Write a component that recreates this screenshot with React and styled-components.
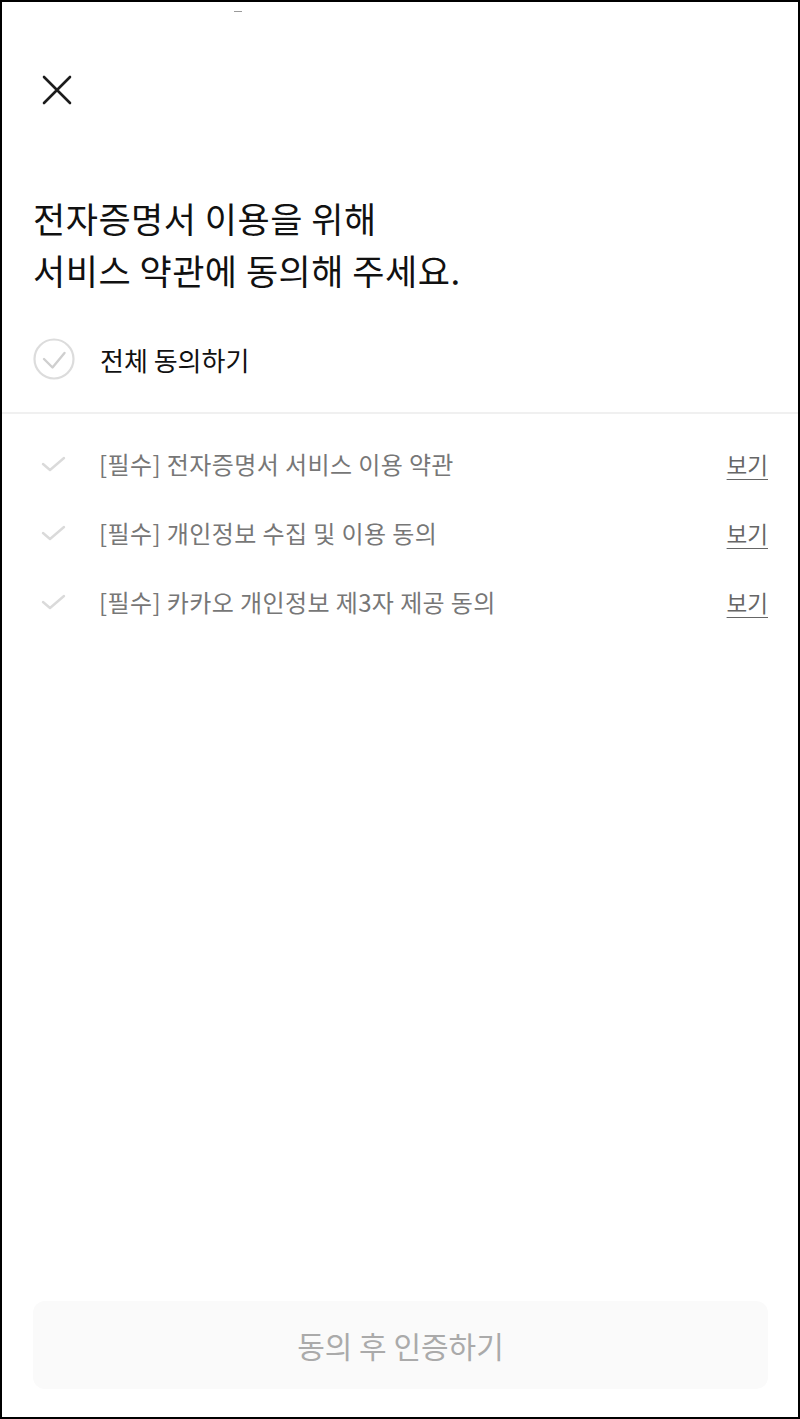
import React from 'react';
import styled, { createGlobalStyle } from 'styled-components';

const GlobalStyle = createGlobalStyle`
  * { box-sizing: border-box; }
  html, body { margin: 0; padding: 0; background: #fff; }
  body {
    font-family: "Noto Sans CJK KR", "Noto Sans", sans-serif;
    -webkit-font-smoothing: antialiased;
  }
`;

const Frame = styled.div`
  width: 800px;
  height: 1419px;
  border: 2px solid #000;
  display: flex;
  flex-direction: column;
  background: #fff;
`;

const StatusBar = styled.div`
  height: 20px;
  display: flex;
  justify-content: flex-start;
  padding: 9px 0 0 232px;
`;

const StatusDash = styled.span`
  width: 8px;
  height: 1px;
  background: #9a9a9a;
`;

const Header = styled.header`
  height: 150px;
  padding: 51px 0 0 38px;
`;

const CloseButton = styled.button`
  width: 34px;
  height: 34px;
  padding: 0;
  border: none;
  background: none;
  display: flex;
  align-items: center;
  justify-content: center;
  color: #1c1c1c;
`;

const Title = styled.h1`
  margin: 20px 0 0;
  padding-left: 31px;
  font-size: 35px;
  font-weight: 400;
  line-height: 52px;
  color: #111;
  letter-spacing: 0.5px;
`;

const AllRow = styled.label`
  display: flex;
  align-items: center;
  gap: 25px;
  height: 96px;
  margin-top: 20px;
  padding: 0 0 10px 31px;
  font-size: 26px;
  color: #111;
`;

const Divider = styled.div`
  height: 2px;
  background: #f0f0f0;
`;

const TermList = styled.ul`
  list-style: none;
  margin: 15px 0 0;
  padding: 0;
`;

const TermRow = styled.li`
  display: flex;
  align-items: center;
  height: 69px;
  padding: 0 30px 0 38px;
`;

const TermText = styled.span`
  flex: 1;
  margin-left: 33px;
  font-size: 24px;
  letter-spacing: 0.4px;
  color: #777;
`;

const ViewLink = styled.a`
  font-size: 22.5px;
  color: #666;
  text-decoration: underline;
  text-underline-offset: 5px;
  text-decoration-thickness: 1px;
  cursor: pointer;
`;

const Spacer = styled.div`
  flex: 1;
`;

const SubmitButton = styled.button`
  margin: 0 30px 28px 31px;
  height: 88px;
  border: none;
  border-radius: 12px;
  background: #fafafa;
  color: #aaa;
  font-family: inherit;
  font-size: 30px;
`;

const CircleCheck = () => (
  <svg width="42" height="42" viewBox="0 0 42 42" fill="none">
    <circle cx="21" cy="21" r="19.5" stroke="#dcdcdc" strokeWidth="2.2" />
    <path d="M11 21l8.5 8.5L31.5 15" stroke="#cfcfcf" strokeWidth="2.4" strokeLinecap="round" strokeLinejoin="round" />
  </svg>
);

const SmallCheck = () => (
  <svg width="26" height="16" viewBox="0 0 26 16" fill="none">
    <path d="M3 8l7 6L24 2" stroke="#dadada" strokeWidth="2.4" strokeLinecap="round" strokeLinejoin="round" />
  </svg>
);

const terms = [
  '[필수] 전자증명서 서비스 이용 약관',
  '[필수] 개인정보 수집 및 이용 동의',
  '[필수] 카카오 개인정보 제3자 제공 동의',
];

export default function App() {
  return (
    <>
      <GlobalStyle />
      <Frame>
        <StatusBar>
          <StatusDash />
        </StatusBar>
        <Header>
          <CloseButton aria-label="닫기">
            <svg width="32" height="32" viewBox="0 0 32 32" fill="none">
              <path d="M3 3l26 26M29 3L3 29" stroke="currentColor" strokeWidth="2.6" strokeLinecap="round" />
            </svg>
          </CloseButton>
        </Header>
        <Title>
          전자증명서 이용을 위해
          <br />
          서비스 약관에 동의해 주세요.
        </Title>
        <AllRow>
          <CircleCheck />
          전체 동의하기
        </AllRow>
        <Divider />
        <TermList>
          {terms.map((t) => (
            <TermRow key={t}>
              <SmallCheck />
              <TermText>{t}</TermText>
              <ViewLink>보기</ViewLink>
            </TermRow>
          ))}
        </TermList>
        <Spacer />
        <SubmitButton>동의 후 인증하기</SubmitButton>
      </Frame>
    </>
  );
}
